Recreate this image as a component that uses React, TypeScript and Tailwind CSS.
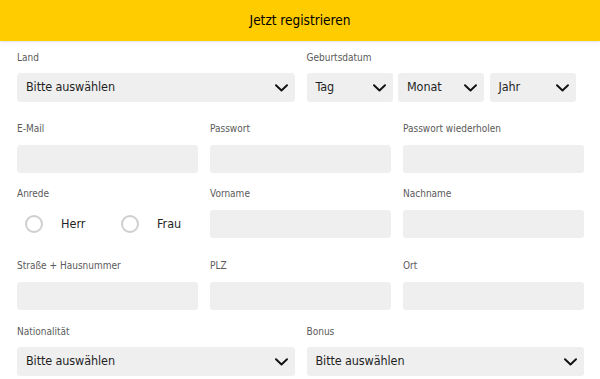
import React from 'react';

const font = "font-['Liberation_Sans_Narrow','DejaVu_Sans_Condensed','Roboto',sans-serif]";

const Chevron: React.FC = () => (
    <svg width="13" height="8" viewBox="0 0 13 8" fill="none" className="shrink-0">
        <polyline points="1,1.2 6.5,6.5 12,1.2" stroke="#111" strokeWidth="1.9" strokeLinecap="round" strokeLinejoin="round" />
    </svg>
);

const Label: React.FC<{ text: string }> = ({ text }) => (
    <div className="text-[10px] leading-[16px] text-[#5a5a5a]">{text}</div>
);

const Select: React.FC<{ text: string; className?: string }> = ({ text, className = '' }) => (
    <div className={`h-[29px] bg-[#efefef] rounded-[3px] flex items-center justify-between pl-[9px] pr-[7px] ${className}`}>
        <span className="text-[12.5px] text-[#1f1f1f] tracking-[-0.1px]">{text}</span>
        <Chevron />
    </div>
);

const Input: React.FC = () => <div className="h-[28px] bg-[#efefef] rounded-[3px]" />;

const Field: React.FC<{ label: string }> = ({ label }) => (
    <div>
        <Label text={label} />
        <div className="mt-[8px]">
            <Input />
        </div>
    </div>
);

const Radio: React.FC<{ label: string }> = ({ label }) => (
    <div className="flex items-center w-[96px] shrink-0">
        <div className="w-[18px] h-[18px] shrink-0 rounded-full border-2 border-[#cfcfcf] bg-white" />
        <span className="ml-[18px] text-[12.5px] text-[#1f1f1f]">{label}</span>
    </div>
);

const App: React.FC = () => {
    return (
        <div className={`w-[600px] h-[379px] overflow-hidden bg-white ${font}`}>
            <div className="h-[41px] bg-[#ffcc00] flex items-center justify-center text-[13.5px] text-black shadow-[0_1px_2px_rgba(0,0,0,0.12)] relative">
                Jetzt registrieren
            </div>

            <div className="pl-[17px] pr-[16px]">
                {/* Land + Geburtsdatum */}
                <div className="grid grid-cols-2 gap-x-3 mt-[9px]">
                    <div>
                        <Label text="Land" />
                        <div className="mt-[7px]">
                            <Select text="Bitte auswählen" />
                        </div>
                    </div>
                    <div>
                        <Label text="Geburtsdatum" />
                        <div className="mt-[7px] flex gap-[5.5px]">
                            <Select text="Tag" className="w-[86px]" />
                            <Select text="Monat" className="w-[86px]" />
                            <Select text="Jahr" className="w-[86px]" />
                        </div>
                    </div>
                </div>

                <div className="grid grid-cols-3 gap-x-3 mt-[19px]">
                    <Field label="E-Mail" />
                    <Field label="Passwort" />
                    <Field label="Passwort wiederholen" />
                </div>

                <div className="grid grid-cols-3 gap-x-3 mt-[13px]">
                    <div className="min-w-0">
                        <Label text="Anrede" />
                        <div className="mt-[8px] h-[28px] flex items-center pl-[8px]">
                            <Radio label="Herr" />
                            <Radio label="Frau" />
                        </div>
                    </div>
                    <Field label="Vorname" />
                    <Field label="Nachname" />
                </div>

                <div className="grid grid-cols-3 gap-x-3 mt-[20px]">
                    <Field label="Straße + Hausnummer" />
                    <Field label="PLZ" />
                    <Field label="Ort" />
                </div>

                <div className="grid grid-cols-2 gap-x-3 mt-[14px]">
                    <div>
                        <Label text="Nationalität" />
                        <div className="mt-[7px]">
                            <Select text="Bitte auswählen" />
                        </div>
                    </div>
                    <div>
                        <Label text="Bonus" />
                        <div className="mt-[7px]">
                            <Select text="Bitte auswählen" />
                        </div>
                    </div>
                </div>
            </div>
        </div>
    );
};

export default App;
